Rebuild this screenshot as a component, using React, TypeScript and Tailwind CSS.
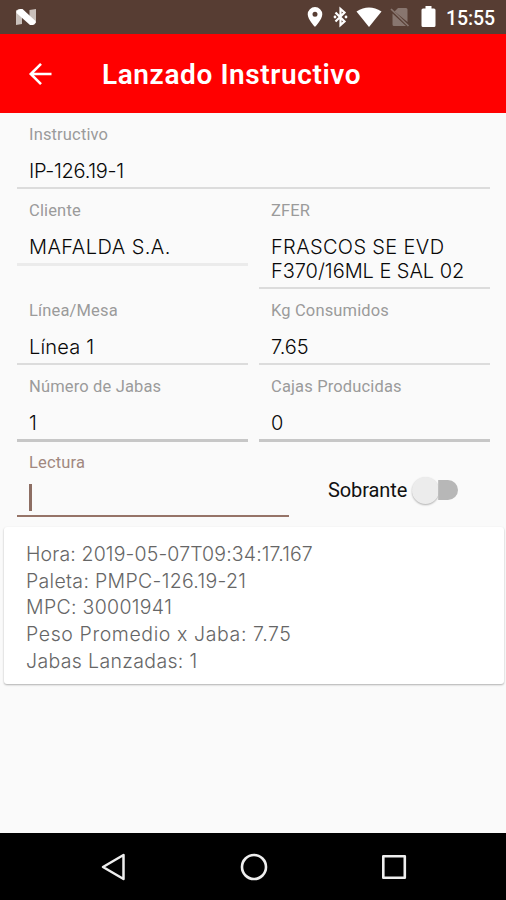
import React from "react";

type FieldProps = {
  label: string;
  children: React.ReactNode;
  line?: string;
  labelClass?: string;
  className?: string;
};

function Field({ label, children, line = "h-[2px] bg-[#dcdcdc]", labelClass = "text-[#9b9b9b]", className = "" }: FieldProps) {
  return (
    <div className={`flex flex-col pt-[11px] ${className}`}>
      <div className={`h-5 pl-[12px] text-[16.5px] leading-5 tracking-[0.15px] whitespace-nowrap ${labelClass}`}>{label}</div>
      <div className="mt-[14px] min-h-6 pl-[12px] font-['Inter',sans-serif] text-[20px] leading-6 font-light whitespace-nowrap text-[#080808]">
        {children}
      </div>
      <div className={`mt-[4px] ${line}`} />
    </div>
  );
}

function StatusBar() {
  return (
    <div className="flex h-[34px] shrink-0 items-center bg-[#573d33] text-white">
      <svg className="ml-[15px]" width="22" height="18" viewBox="0 0 22 18">
        <path d="M1 2v15l6-1V6zM21 1v14.500L14.500 11V2z" fill="#c9c0bb" />
        <path d="M1.500 3Q2.500 1 5 1h2.500L20.500 13v1.500q-.5 2-2.500 2.500h-3L1.500 5z" fill="#fff" />
      </svg>
      <div className="flex-1" />
      <svg width="16" height="22" viewBox="0 0 16 22">
        <path fillRule="evenodd" d="M8 1a7.300 7.300 0 0 0-7.300 7.300C.7 13.500 8 21 8 21s7.300-7.500 7.300-12.700A7.300 7.300 0 0 0 8 1m0 4.700a2.500 2.500 0 1 1 0 5 2.500 2.500 0 0 1 0-5" fill="#fff" />
      </svg>
      <svg className="ml-[10px]" width="16" height="22" viewBox="0 0 16 22">
        <path d="m2.500 6.500 9 9L7.500 19V3l4 3.500-9 9" fill="none" stroke="#fff" strokeWidth="2.200" />
        <circle cx="2" cy="11" r="1.400" fill="#fff" />
        <circle cx="13" cy="11" r="1.400" fill="#fff" />
      </svg>
      <svg className="ml-[7px]" width="26" height="20" viewBox="0 0 26 20">
        <path d="M.5 4.500Q13-3.500 25.500 4.500L13 20z" fill="#fff" />
      </svg>
      <svg className="ml-[8px]" width="20" height="20" viewBox="0 0 20 20">
        <path d="M8 1h8q1.500 0 1.500 1.500V15L4.500 4.500zM2.500 6.500 16 19H4q-1.500 0-1.500-1.500z" fill="#88766f" />
        <path d="m1 2 17.500 17" stroke="#88766f" strokeWidth="1.700" />
      </svg>
      <svg className="ml-[11px]" width="15" height="22" viewBox="0 0 15 22">
        <path d="M4.500 0h6v2.500H13q1.500 0 1.500 1.500v15.500Q14.500 21 13 21H2Q.5 21 .5 19.500V4Q.5 2.500 2 2.500h2.500z" fill="#fff" />
      </svg>
      <span className="mt-[3px] mr-[11px] ml-[10px] text-[19.5px] leading-6 font-medium tracking-[-0.1px]">15:55</span>
    </div>
  );
}

export default function App() {
  return (
    <div className="flex h-[900px] w-[506px] flex-col overflow-hidden bg-[#fafafa] font-['Roboto',sans-serif]">
      <StatusBar />
      <header className="flex h-[79px] shrink-0 items-center bg-[#ff0000] text-white">
        <svg className="ml-[28px]" width="24" height="24" viewBox="0 0 24 24" fill="none" stroke="#fff" strokeWidth="2.600">
          <path d="M23.500 12H3M13 1.800 2.800 12 13 22.200" />
        </svg>
        <h1 className="mt-[3px] ml-[50px] text-[28px] leading-8 font-semibold tracking-[0.600px] whitespace-nowrap">Lanzado Instructivo</h1>
      </header>

      <main className="flex flex-1 flex-col pt-px">
        <div className="grid grid-cols-[231px_231px] items-start gap-x-[11px] pl-[17px]">
          <Field label="Instructivo" className="col-span-2 h-[76px]">
            <span className="tracking-[-0.300px]">IP-126.19-1</span>
          </Field>
          <Field label="Cliente" className="h-[100px]" line="h-[3px] bg-[#ebebeb]">
            <span className="tracking-[0.450px]">MAFALDA S.A.</span>
          </Field>
          <Field label="ZFER" className="h-[100px]">
            <div className="tracking-[0.350px]">FRASCOS SE EVD</div>
            <div className="tracking-[-0.050px]">F370/16ML E SAL 02</div>
          </Field>
          <Field label="Línea/Mesa" className="h-[76px]"><span className="tracking-[0.2px]">Línea 1</span></Field>
          <Field label="Kg Consumidos" className="h-[76px]"><span>7.65</span></Field>
          <Field label="Número de Jabas" className="h-[76px]" line="h-[3px] bg-[#c7c7c7]"><span>1</span></Field>
          <Field label="Cajas Producidas" className="h-[76px]" line="h-[3px] bg-[#c7c7c7]"><span>0</span></Field>
        </div>

        <div className="flex h-[85px] pl-[17px]">
          <Field label="Lectura" className="w-[272px]" labelClass="text-[#a1887f]" line="h-[2px] bg-[#967468]">
            <div className="mt-[-3px] h-[27px] w-[3px] bg-[#8d6e63]" />
          </Field>
          <div className="ml-[39px] flex h-[96px] items-center">
            <span className="text-[20px] leading-6 tracking-[-0.1px] text-[#111]">Sobrante</span>
            <div className="ml-[5px] flex h-[28px] w-[46px] items-center">
              <div className="h-[27px] w-[27px] rounded-full bg-[#ececec] shadow-[0_1px_2px_rgba(0,0,0,0.3)]" />
              <div className="ml-[-8px] h-[20px] flex-1 rounded-r-full bg-[#b7b7b7] [clip-path:inset(0_0_0_7px)]" />
            </div>
          </div>
        </div>

        <section className="mr-[2px] ml-[4px] h-[157px] rounded-[3px] bg-white pt-[14px] pl-[22px] font-['Inter',sans-serif] text-[19.5px] leading-[26.7px] font-light whitespace-nowrap text-[#666] shadow-[0_1px_2px_rgba(0,0,0,0.3)]">
          <div className="tracking-[0.140px]">Hora: 2019-05-07T09:34:17.167</div>
          <div className="tracking-[0.320px]">Paleta: PMPC-126.19-21</div>
          <div className="tracking-[0.320px]">MPC: 30001941</div>
          <div className="tracking-[0.600px]">Peso Promedio x Jaba: 7.75</div>
          <div className="tracking-[0.350px]">Jabas Lanzadas: 1</div>
        </section>
      </main>

      <nav className="flex h-[67px] shrink-0 items-center justify-between bg-black pr-[99px] pl-[101px]">
        <svg width="25" height="28" viewBox="0 0 25 28" fill="none" stroke="#eee" strokeWidth="2.500" strokeLinejoin="round">
          <path d="M22.500 2v24L2 14z" />
        </svg>
        <svg width="28" height="28" viewBox="0 0 28 28" fill="none" stroke="#eee" strokeWidth="2.600">
          <circle cx="14" cy="14" r="12" />
        </svg>
        <svg width="26" height="26" viewBox="0 0 26 26" fill="none" stroke="#eee" strokeWidth="2.600" strokeLinejoin="round">
          <path d="M2.300 2.300h21.500v21.500H2.300z" />
        </svg>
      </nav>
    </div>
  );
}
